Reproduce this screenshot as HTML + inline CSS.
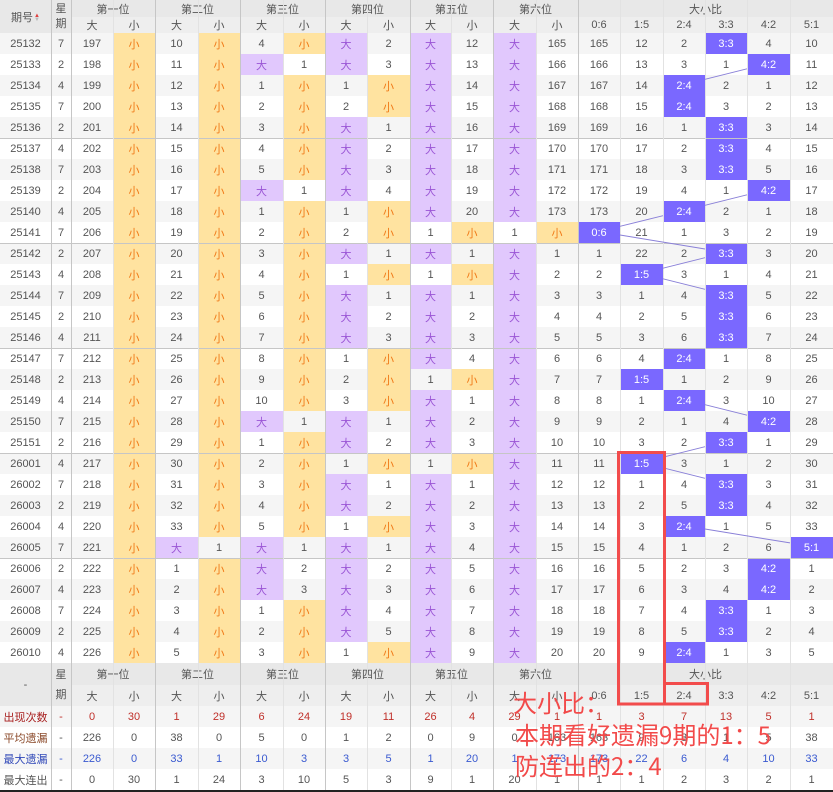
<!DOCTYPE html>
<html><head><meta charset="utf-8"><style>
*{margin:0;padding:0;box-sizing:border-box}
body{width:833px;height:792px;background:#fff;position:relative;overflow:hidden;font-family:"Liberation Sans","Noto Sans CJK SC",sans-serif;color:#555}
table{position:absolute;left:0;top:0;border-collapse:collapse;table-layout:fixed;width:833px;font-size:11px}
td{text-align:center;padding:0;white-space:nowrap;overflow:hidden}
tr.d td{height:21px}
tr.d:nth-child(even) td{background:#fff}
tr.d:nth-child(odd) td{background:#f5f5f5}
tr.h1 td{background:#e8e8e8;height:17px;font-size:11px}
tr.h2 td{background:#eeeeee;height:15px;font-size:11px}
tr.f1 td{background:#e8e8e8;height:22px;font-size:11px}
tr.f2 td{background:#eeeeee;height:21px;font-size:11px}
tr.d td.b{background:#e1c8fd;color:#9a55d5}
tr.d td.s{background:#ffe3a0;color:#f07a18}
tr.d td.h{background:#7a68ff;color:#fff}
tr.g td{box-shadow:inset 0 1px 0 #c6c6c6}
tr.st td{height:21px}
tr.st:nth-child(even) td{background:#fff}
tr.st:nth-child(odd) td{background:#f5f5f5}
.r1 td{color:#c0302a}.r1 td:first-child{color:#a82020}
.r2 td:first-child{color:#8b4a2a}
.r3 td{color:#3a5ad0}.r3 td:first-child{color:#3048b8}
.vl{position:absolute;top:0;height:790px;width:1px;background:#e2e2e2}
.vs{background:#c6c6c6}
.arr{display:inline-block;vertical-align:middle;margin-left:1px;line-height:4px;font-size:6px}
</style></head><body>
<table>
<colgroup><col style="width:51px"><col style="width:20px"><col style="width:42px"><col style="width:42px"><col style="width:43px"><col style="width:42px"><col style="width:43px"><col style="width:42px"><col style="width:42px"><col style="width:43px"><col style="width:41px"><col style="width:42px"><col style="width:43px"><col style="width:42px"><col style="width:42px"><col style="width:43px"><col style="width:42px"><col style="width:42px"><col style="width:43px"><col style="width:43px"></colgroup>
<tr class="h1"><td rowspan="2" style="background:#e8e8e8">期号<span class="arr"><span style="color:#e04040">▲</span><br><span style="color:#bbb">▼</span></span></td><td rowspan="2" style="background:#e8e8e8;line-height:15px">星<br>期</td><td colspan="2">第一位</td><td colspan="2">第二位</td><td colspan="2">第三位</td><td colspan="2">第四位</td><td colspan="2">第五位</td><td colspan="2">第六位</td><td colspan="6">大小比</td></tr>
<tr class="h2"><td>大</td><td>小</td><td>大</td><td>小</td><td>大</td><td>小</td><td>大</td><td>小</td><td>大</td><td>小</td><td>大</td><td>小</td><td>0:6</td><td>1:5</td><td>2:4</td><td>3:3</td><td>4:2</td><td>5:1</td></tr>
<tr class="d"><td>25132</td><td>7</td><td>197</td><td class="s">小</td><td>10</td><td class="s">小</td><td>4</td><td class="s">小</td><td class="b">大</td><td>2</td><td class="b">大</td><td>12</td><td class="b">大</td><td>165</td><td>165</td><td>12</td><td>2</td><td class="h">3:3</td><td>4</td><td>10</td></tr>
<tr class="d"><td>25133</td><td>2</td><td>198</td><td class="s">小</td><td>11</td><td class="s">小</td><td class="b">大</td><td>1</td><td class="b">大</td><td>3</td><td class="b">大</td><td>13</td><td class="b">大</td><td>166</td><td>166</td><td>13</td><td>3</td><td>1</td><td class="h">4:2</td><td>11</td></tr>
<tr class="d"><td>25134</td><td>4</td><td>199</td><td class="s">小</td><td>12</td><td class="s">小</td><td>1</td><td class="s">小</td><td>1</td><td class="s">小</td><td class="b">大</td><td>14</td><td class="b">大</td><td>167</td><td>167</td><td>14</td><td class="h">2:4</td><td>2</td><td>1</td><td>12</td></tr>
<tr class="d"><td>25135</td><td>7</td><td>200</td><td class="s">小</td><td>13</td><td class="s">小</td><td>2</td><td class="s">小</td><td>2</td><td class="s">小</td><td class="b">大</td><td>15</td><td class="b">大</td><td>168</td><td>168</td><td>15</td><td class="h">2:4</td><td>3</td><td>2</td><td>13</td></tr>
<tr class="d"><td>25136</td><td>2</td><td>201</td><td class="s">小</td><td>14</td><td class="s">小</td><td>3</td><td class="s">小</td><td class="b">大</td><td>1</td><td class="b">大</td><td>16</td><td class="b">大</td><td>169</td><td>169</td><td>16</td><td>1</td><td class="h">3:3</td><td>3</td><td>14</td></tr>
<tr class="d g"><td>25137</td><td>4</td><td>202</td><td class="s">小</td><td>15</td><td class="s">小</td><td>4</td><td class="s">小</td><td class="b">大</td><td>2</td><td class="b">大</td><td>17</td><td class="b">大</td><td>170</td><td>170</td><td>17</td><td>2</td><td class="h">3:3</td><td>4</td><td>15</td></tr>
<tr class="d"><td>25138</td><td>7</td><td>203</td><td class="s">小</td><td>16</td><td class="s">小</td><td>5</td><td class="s">小</td><td class="b">大</td><td>3</td><td class="b">大</td><td>18</td><td class="b">大</td><td>171</td><td>171</td><td>18</td><td>3</td><td class="h">3:3</td><td>5</td><td>16</td></tr>
<tr class="d"><td>25139</td><td>2</td><td>204</td><td class="s">小</td><td>17</td><td class="s">小</td><td class="b">大</td><td>1</td><td class="b">大</td><td>4</td><td class="b">大</td><td>19</td><td class="b">大</td><td>172</td><td>172</td><td>19</td><td>4</td><td>1</td><td class="h">4:2</td><td>17</td></tr>
<tr class="d"><td>25140</td><td>4</td><td>205</td><td class="s">小</td><td>18</td><td class="s">小</td><td>1</td><td class="s">小</td><td>1</td><td class="s">小</td><td class="b">大</td><td>20</td><td class="b">大</td><td>173</td><td>173</td><td>20</td><td class="h">2:4</td><td>2</td><td>1</td><td>18</td></tr>
<tr class="d"><td>25141</td><td>7</td><td>206</td><td class="s">小</td><td>19</td><td class="s">小</td><td>2</td><td class="s">小</td><td>2</td><td class="s">小</td><td>1</td><td class="s">小</td><td>1</td><td class="s">小</td><td class="h">0:6</td><td>21</td><td>1</td><td>3</td><td>2</td><td>19</td></tr>
<tr class="d g"><td>25142</td><td>2</td><td>207</td><td class="s">小</td><td>20</td><td class="s">小</td><td>3</td><td class="s">小</td><td class="b">大</td><td>1</td><td class="b">大</td><td>1</td><td class="b">大</td><td>1</td><td>1</td><td>22</td><td>2</td><td class="h">3:3</td><td>3</td><td>20</td></tr>
<tr class="d"><td>25143</td><td>4</td><td>208</td><td class="s">小</td><td>21</td><td class="s">小</td><td>4</td><td class="s">小</td><td>1</td><td class="s">小</td><td>1</td><td class="s">小</td><td class="b">大</td><td>2</td><td>2</td><td class="h">1:5</td><td>3</td><td>1</td><td>4</td><td>21</td></tr>
<tr class="d"><td>25144</td><td>7</td><td>209</td><td class="s">小</td><td>22</td><td class="s">小</td><td>5</td><td class="s">小</td><td class="b">大</td><td>1</td><td class="b">大</td><td>1</td><td class="b">大</td><td>3</td><td>3</td><td>1</td><td>4</td><td class="h">3:3</td><td>5</td><td>22</td></tr>
<tr class="d"><td>25145</td><td>2</td><td>210</td><td class="s">小</td><td>23</td><td class="s">小</td><td>6</td><td class="s">小</td><td class="b">大</td><td>2</td><td class="b">大</td><td>2</td><td class="b">大</td><td>4</td><td>4</td><td>2</td><td>5</td><td class="h">3:3</td><td>6</td><td>23</td></tr>
<tr class="d"><td>25146</td><td>4</td><td>211</td><td class="s">小</td><td>24</td><td class="s">小</td><td>7</td><td class="s">小</td><td class="b">大</td><td>3</td><td class="b">大</td><td>3</td><td class="b">大</td><td>5</td><td>5</td><td>3</td><td>6</td><td class="h">3:3</td><td>7</td><td>24</td></tr>
<tr class="d g"><td>25147</td><td>7</td><td>212</td><td class="s">小</td><td>25</td><td class="s">小</td><td>8</td><td class="s">小</td><td>1</td><td class="s">小</td><td class="b">大</td><td>4</td><td class="b">大</td><td>6</td><td>6</td><td>4</td><td class="h">2:4</td><td>1</td><td>8</td><td>25</td></tr>
<tr class="d"><td>25148</td><td>2</td><td>213</td><td class="s">小</td><td>26</td><td class="s">小</td><td>9</td><td class="s">小</td><td>2</td><td class="s">小</td><td>1</td><td class="s">小</td><td class="b">大</td><td>7</td><td>7</td><td class="h">1:5</td><td>1</td><td>2</td><td>9</td><td>26</td></tr>
<tr class="d"><td>25149</td><td>4</td><td>214</td><td class="s">小</td><td>27</td><td class="s">小</td><td>10</td><td class="s">小</td><td>3</td><td class="s">小</td><td class="b">大</td><td>1</td><td class="b">大</td><td>8</td><td>8</td><td>1</td><td class="h">2:4</td><td>3</td><td>10</td><td>27</td></tr>
<tr class="d"><td>25150</td><td>7</td><td>215</td><td class="s">小</td><td>28</td><td class="s">小</td><td class="b">大</td><td>1</td><td class="b">大</td><td>1</td><td class="b">大</td><td>2</td><td class="b">大</td><td>9</td><td>9</td><td>2</td><td>1</td><td>4</td><td class="h">4:2</td><td>28</td></tr>
<tr class="d"><td>25151</td><td>2</td><td>216</td><td class="s">小</td><td>29</td><td class="s">小</td><td>1</td><td class="s">小</td><td class="b">大</td><td>2</td><td class="b">大</td><td>3</td><td class="b">大</td><td>10</td><td>10</td><td>3</td><td>2</td><td class="h">3:3</td><td>1</td><td>29</td></tr>
<tr class="d g"><td>26001</td><td>4</td><td>217</td><td class="s">小</td><td>30</td><td class="s">小</td><td>2</td><td class="s">小</td><td>1</td><td class="s">小</td><td>1</td><td class="s">小</td><td class="b">大</td><td>11</td><td>11</td><td class="h">1:5</td><td>3</td><td>1</td><td>2</td><td>30</td></tr>
<tr class="d"><td>26002</td><td>7</td><td>218</td><td class="s">小</td><td>31</td><td class="s">小</td><td>3</td><td class="s">小</td><td class="b">大</td><td>1</td><td class="b">大</td><td>1</td><td class="b">大</td><td>12</td><td>12</td><td>1</td><td>4</td><td class="h">3:3</td><td>3</td><td>31</td></tr>
<tr class="d"><td>26003</td><td>2</td><td>219</td><td class="s">小</td><td>32</td><td class="s">小</td><td>4</td><td class="s">小</td><td class="b">大</td><td>2</td><td class="b">大</td><td>2</td><td class="b">大</td><td>13</td><td>13</td><td>2</td><td>5</td><td class="h">3:3</td><td>4</td><td>32</td></tr>
<tr class="d"><td>26004</td><td>4</td><td>220</td><td class="s">小</td><td>33</td><td class="s">小</td><td>5</td><td class="s">小</td><td>1</td><td class="s">小</td><td class="b">大</td><td>3</td><td class="b">大</td><td>14</td><td>14</td><td>3</td><td class="h">2:4</td><td>1</td><td>5</td><td>33</td></tr>
<tr class="d"><td>26005</td><td>7</td><td>221</td><td class="s">小</td><td class="b">大</td><td>1</td><td class="b">大</td><td>1</td><td class="b">大</td><td>1</td><td class="b">大</td><td>4</td><td class="b">大</td><td>15</td><td>15</td><td>4</td><td>1</td><td>2</td><td>6</td><td class="h">5:1</td></tr>
<tr class="d g"><td>26006</td><td>2</td><td>222</td><td class="s">小</td><td>1</td><td class="s">小</td><td class="b">大</td><td>2</td><td class="b">大</td><td>2</td><td class="b">大</td><td>5</td><td class="b">大</td><td>16</td><td>16</td><td>5</td><td>2</td><td>3</td><td class="h">4:2</td><td>1</td></tr>
<tr class="d"><td>26007</td><td>4</td><td>223</td><td class="s">小</td><td>2</td><td class="s">小</td><td class="b">大</td><td>3</td><td class="b">大</td><td>3</td><td class="b">大</td><td>6</td><td class="b">大</td><td>17</td><td>17</td><td>6</td><td>3</td><td>4</td><td class="h">4:2</td><td>2</td></tr>
<tr class="d"><td>26008</td><td>7</td><td>224</td><td class="s">小</td><td>3</td><td class="s">小</td><td>1</td><td class="s">小</td><td class="b">大</td><td>4</td><td class="b">大</td><td>7</td><td class="b">大</td><td>18</td><td>18</td><td>7</td><td>4</td><td class="h">3:3</td><td>1</td><td>3</td></tr>
<tr class="d"><td>26009</td><td>2</td><td>225</td><td class="s">小</td><td>4</td><td class="s">小</td><td>2</td><td class="s">小</td><td class="b">大</td><td>5</td><td class="b">大</td><td>8</td><td class="b">大</td><td>19</td><td>19</td><td>8</td><td>5</td><td class="h">3:3</td><td>2</td><td>4</td></tr>
<tr class="d"><td>26010</td><td>4</td><td>226</td><td class="s">小</td><td>5</td><td class="s">小</td><td>3</td><td class="s">小</td><td>1</td><td class="s">小</td><td class="b">大</td><td>9</td><td class="b">大</td><td>20</td><td>20</td><td>9</td><td class="h">2:4</td><td>1</td><td>3</td><td>5</td></tr>
<tr class="f1"><td rowspan="2" style="background:#e8e8e8">-</td><td rowspan="2" style="background:#e8e8e8;line-height:20px">星<br>期</td><td colspan="2">第一位</td><td colspan="2">第二位</td><td colspan="2">第三位</td><td colspan="2">第四位</td><td colspan="2">第五位</td><td colspan="2">第六位</td><td colspan="6">大小比</td></tr>
<tr class="f2"><td>大</td><td>小</td><td>大</td><td>小</td><td>大</td><td>小</td><td>大</td><td>小</td><td>大</td><td>小</td><td>大</td><td>小</td><td>0:6</td><td>1:5</td><td>2:4</td><td>3:3</td><td>4:2</td><td>5:1</td></tr>
<tr class="st r1"><td>出现次数</td><td>-</td><td>0</td><td>30</td><td>1</td><td>29</td><td>6</td><td>24</td><td>19</td><td>11</td><td>26</td><td>4</td><td>29</td><td>1</td><td>1</td><td>3</td><td>7</td><td>13</td><td>5</td><td>1</td></tr>
<tr class="st r2"><td>平均遗漏</td><td>-</td><td>226</td><td>0</td><td>38</td><td>0</td><td>5</td><td>0</td><td>1</td><td>2</td><td>0</td><td>9</td><td>0</td><td>163</td><td>163</td><td>9</td><td>3</td><td>1</td><td>5</td><td>38</td></tr>
<tr class="st r3"><td>最大遗漏</td><td>-</td><td>226</td><td>0</td><td>33</td><td>1</td><td>10</td><td>3</td><td>3</td><td>5</td><td>1</td><td>20</td><td>1</td><td>173</td><td>173</td><td>22</td><td>6</td><td>4</td><td>10</td><td>33</td></tr>
<tr class="st"><td>最大连出</td><td>-</td><td>0</td><td>30</td><td>1</td><td>24</td><td>3</td><td>10</td><td>5</td><td>3</td><td>9</td><td>1</td><td>20</td><td>1</td><td>1</td><td>1</td><td>2</td><td>3</td><td>2</td><td>1</td></tr>
</table>
<div class="vl vs" style="left:51px"></div><div class="vl vs" style="left:71px"></div>
<div class="vl" style="left:113px"></div><div class="vl vs" style="left:155px"></div>
<div class="vl" style="left:198px"></div><div class="vl vs" style="left:240px"></div>
<div class="vl" style="left:283px"></div><div class="vl vs" style="left:325px"></div>
<div class="vl" style="left:367px"></div><div class="vl vs" style="left:410px"></div>
<div class="vl" style="left:451px"></div><div class="vl vs" style="left:493px"></div>
<div class="vl" style="left:536px"></div><div class="vl vs" style="left:578px"></div>
<div class="vl" style="left:620px"></div><div class="vl" style="left:663px"></div>
<div class="vl" style="left:705px"></div><div class="vl" style="left:747px"></div><div class="vl" style="left:790px"></div>
<div style="position:absolute;left:0;top:790px;width:833px;height:2px;background:#222"></div>
<svg width="833" height="792" style="position:absolute;left:0;top:0" xmlns="http://www.w3.org/2000/svg">
<g stroke="#8a80d8" stroke-width="1" fill="none">
<line x1="747" y1="68.8" x2="705" y2="79.3"/>
<line x1="747" y1="194.8" x2="705" y2="205.3"/>
<line x1="663" y1="215.7" x2="620" y2="226.3"/>
<line x1="620" y1="235" x2="705" y2="249"/>
<line x1="705" y1="257.7" x2="663" y2="268.2"/>
<line x1="663" y1="278.8" x2="705" y2="289.3"/>
<line x1="705" y1="404.7" x2="747" y2="415.2"/>
<line x1="705" y1="446.7" x2="663" y2="457.2"/>
<line x1="663" y1="467.8" x2="705" y2="478.3"/>
<line x1="705" y1="529" x2="790" y2="542.9"/>
</g>
<g stroke="#f24c4c" stroke-width="3" fill="none">
<rect x="618.5" y="452.5" width="46" height="251.5"/>
<rect x="664.5" y="683.5" width="43" height="20.5"/>
</g>
<g fill="#f24a4a" font-family="Noto Sans CJK SC, sans-serif" font-size="24">
<text x="513" y="712">大小比：</text>
<text x="515" y="744">本期看好遗漏9期的1：5</text>
<text x="515" y="775">防连出的2：4</text>
</g>
</svg>
</body></html>
